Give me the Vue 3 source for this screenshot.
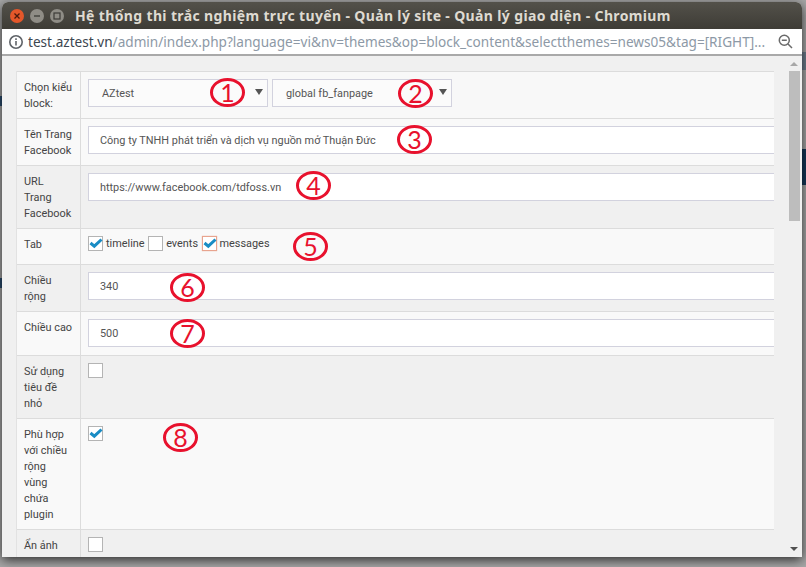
<script setup>
const badges = [
  { n: 1, x: 210, y: 78 }, { n: 2, x: 398, y: 79 }, { n: 3, x: 397, y: 125 }, { n: 4, x: 296, y: 171 },
  { n: 5, x: 293, y: 232 }, { n: 6, x: 170, y: 273 }, { n: 7, x: 170, y: 319 }, { n: 8, x: 163, y: 423 }
]
const pos = (b) => ({ left: b.x + 'px', top: b.y + 'px' })
</script>

<template>
  <div class="screen">
    <span class="bit navy"></span>
    <span class="bit tx1"></span>
    <span class="bit tx2"></span>
    <span class="bit tx3"></span>
    <div class="window">
      <header class="titlebar">
        <div class="lights">
          <span class="light close"><svg width="8" height="8" viewBox="0 0 8 8"><path d="M1.5 1.5l5 5M6.5 1.5l-5 5" stroke="#4a1a0c" stroke-width="1.3"/></svg></span>
          <span class="light"><svg width="8" height="8" viewBox="0 0 8 8"><path d="M1 4h6" stroke="#3c3b37" stroke-width="1.3"/></svg></span>
          <span class="light"><svg width="8" height="8" viewBox="0 0 8 8"><rect x="1" y="1" width="6" height="6" fill="none" stroke="#3c3b37" stroke-width="1.2"/></svg></span>
        </div>
        <div class="title">Hệ thống thi trắc nghiệm trực tuyến - Quản lý site - Quản lý giao diện - Chromium</div>
      </header>
      <div class="urlbar">
        <svg class="info" width="16" height="16" viewBox="0 0 16 16"><circle cx="8" cy="8" r="6.2" fill="none" stroke="#5f6368" stroke-width="1.6"/><path d="M8 7v4.5M8 4.3v1.6" stroke="#5f6368" stroke-width="1.6"/></svg>
        <div class="url"><span class="host">test.aztest.vn</span>/admin/index.php?language=vi&amp;nv=themes&amp;op=block_content&amp;selectthemes=news05&amp;tag=[RIGHT]...</div>
        <svg class="zoomout" width="15" height="15" viewBox="0 0 15 15"><circle cx="6.3" cy="6.3" r="5" fill="none" stroke="#6a6a6a" stroke-width="1.5"/><path d="M3.8 6.3h5M10 10l4 4" stroke="#6a6a6a" stroke-width="1.5"/></svg>
      </div>
      <main class="content">
        <div class="table">
          <div class="row first">
            <div class="label">Chọn kiểu block:</div>
            <div class="ctl selects">
              <div class="select"><span>AZtest</span><i class="caret"></i></div>
              <div class="select"><span>global fb_fanpage</span><i class="caret"></i></div>
            </div>
          </div>
          <div class="row odd">
            <div class="label">Tên Trang Facebook</div>
            <div class="ctl"><div class="input">Công ty TNHH phát triển và dịch vụ nguồn mở Thuận Đức</div></div>
          </div>
          <div class="row even">
            <div class="label">URL<br>Trang Facebook</div>
            <div class="ctl"><div class="input">https://www.facebook.com/tdfoss.vn</div></div>
          </div>
          <div class="row odd">
            <div class="label">Tab</div>
            <div class="ctl checks">
              <span class="box"><svg class="tick" width="14" height="12" viewBox="0 0 14 12"><path d="M1.5 6l3.8 3.2L12.5 2.5" fill="none" stroke="#1a8cc4" stroke-width="3"/></svg></span>
              <span class="cap">timeline</span>
              <span class="box"></span>
              <span class="cap">events</span>
              <span class="box focus"><svg class="tick" width="14" height="12" viewBox="0 0 14 12"><path d="M1.5 6l3.8 3.2L12.5 2.5" fill="none" stroke="#1a8cc4" stroke-width="3"/></svg></span>
              <span class="cap">messages</span>
            </div>
          </div>
          <div class="row even">
            <div class="label">Chiều rộng</div>
            <div class="ctl"><div class="input">340</div></div>
          </div>
          <div class="row odd">
            <div class="label">Chiều cao</div>
            <div class="ctl"><div class="input">500</div></div>
          </div>
          <div class="row even">
            <div class="label">Sử dụng tiêu đề nhỏ</div>
            <div class="ctl top"><span class="box"></span></div>
          </div>
          <div class="row odd">
            <div class="label">Phù hợp với chiều rộng<br>vùng chứa plugin</div>
            <div class="ctl top"><span class="box"><svg class="tick" width="14" height="12" viewBox="0 0 14 12"><path d="M1.5 6l3.8 3.2L12.5 2.5" fill="none" stroke="#1a8cc4" stroke-width="3"/></svg></span></div>
          </div>
          <div class="row even">
            <div class="label">Ẩn ảnh bìa</div>
            <div class="ctl top"><span class="box"></span></div>
          </div>
        </div>
        <div class="scrollbar">
          <i class="arrow up"></i>
          <div class="thumb"></div>
          <i class="arrow down"></i>
        </div>
      </main>
      <span v-for="b in badges" :key="b.n" class="badge" :style="pos(b)">{{ b.n }}</span>
    </div>
  </div>
</template>

<style>
html, body { margin: 0; }
</style>

<style scoped>
.screen {
  position: relative;
  width: 806px;
  height: 567px;
  overflow: hidden;
  background: #a8a8a8;
  font-family: "Noto Sans", "Open Sans", sans-serif;
}
.bit { position: absolute; }
.navy { left: 802px; top: 149px; width: 4px; height: 36px; background: #15385a; }
.tx1 { left: 802px; top: 52px; width: 4px; height: 18px; background: #6f7f8f; }
.tx2 { left: 0; top: 96px; width: 2px; height: 10px; background: #2b4d70; }
.tx3 { left: 0; top: 278px; width: 2px; height: 10px; background: #2b4d70; }
.window {
  position: absolute;
  left: 2px;
  top: 2px;
  width: 800px;
  height: 555px;
  display: flex;
  flex-direction: column;
  background: #f0f0f0;
  border-radius: 6px 6px 0 0;
  box-shadow: 0 3px 12px rgba(0, 0, 0, .75);
}
.titlebar {
  height: 27px;
  flex: none;
  display: flex;
  align-items: center;
  border-radius: 6px 6px 0 0;
  background: linear-gradient(#53514a, #3e3c36);
}
.lights { display: flex; gap: 6px; margin-left: 8px; width: 65px; flex: none; }
.light {
  width: 14px;
  height: 14px;
  border-radius: 50%;
  background: #8f8d86;
  display: flex;
  align-items: center;
  justify-content: center;
}
.light.close { background: #e4572a; }
.title {
  color: #dfdbd2;
  font-size: 14px;
  font-weight: 700;
  letter-spacing: .36px;
  white-space: nowrap;
}
.urlbar {
  height: 27px;
  flex: none;
  box-sizing: border-box;
  display: flex;
  align-items: center;
  background: #fff;
  border-bottom: 2px solid #a9a9a9;
}
.info { margin-left: 6px; flex: none; }
.url {
  margin-left: 4px;
  font-size: 13.6px;
  color: #8d99a6;
  white-space: nowrap;
  width: 742px;
  overflow: hidden;
}
.host { color: #3c4650; }
.zoomout { margin-left: 8px; flex: none; }
.content {
  flex: 1;
  min-height: 0;
  display: flex;
  padding: 15px 0 0 14px;
  overflow: hidden;
}
.table {
  width: 758px;
  flex: none;
  align-self: flex-start;
  color: #444;
  font-family: Roboto, "Noto Sans", sans-serif;
  font-size: 10.9px;
  line-height: 16px;
  border-left: 1px solid #e2e2e2;
  box-sizing: border-box;
}
.row {
  display: grid;
  grid-template-columns: 64px 1fr;
  border-top: 1px solid #dcdcdc;
}
.first { background: #f8f8f8; }
.odd { background: #f9f9f9; }
.even { background: #f0f0f0; }
.label {
  padding: 8px 6px 6px 7px;
  border-right: 1px solid #dcdcdc;
}
.ctl { padding: 7px 0 8px 7px; min-width: 0; overflow: hidden; }
.ctl.top { padding-bottom: 0; }
.selects { display: flex; gap: 4px; }
.select, .input {
  box-sizing: border-box;
  height: 28px;
  padding-top: 1px;
  border: 1px solid #d2d2de;
  background: #fff;
  color: #555;
  display: flex;
  align-items: center;
}
.select {
  flex: none;
  width: 180px;
  padding-left: 13px;
  background: #fbfbfb;
  position: relative;
}
.caret {
  position: absolute;
  right: 4px;
  top: 9px;
  border-left: 4px solid transparent;
  border-right: 4px solid transparent;
  border-top: 6px solid #555;
}
.input { padding-left: 11px; white-space: nowrap; border-right: 0; }
.checks { display: flex; align-items: flex-start; height: 21px; padding-bottom: 7px; }
.box {
  box-sizing: border-box;
  width: 15px;
  height: 15px;
  flex: none;
  display: block;
  position: relative;
  background: #fff;
  border: 1px solid #b4b4b4;
}
.box.focus { border-color: #e8a48f; box-shadow: 0 0 1px #e8a48f; }
.tick { position: absolute; left: 0; top: 0; }
.cap { margin-left: 3px; margin-right: 3.5px; color: #444; }
.scrollbar {
  margin-left: 15px;
  width: 11px;
  flex: none;
  position: relative;
  display: flex;
  flex-direction: column;
  align-items: center;
}
.thumb { width: 11px; height: 150px; background: #bdbdbd; }
.arrow {
  position: absolute;
  left: 1px;
  border-left: 4px solid transparent;
  border-right: 4px solid transparent;
}
.arrow.up { top: -9px; border-bottom: 4px solid #a8a8a8; }
.arrow.down { bottom: 6px; border-top: 4px solid #505050; }
.badge {
  position: absolute;
  width: 35px;
  height: 29px;
  box-sizing: border-box;
  margin: -2px 0 0 -2px;
  border: 3px solid #e8112d;
  border-radius: 50%;
  color: #e8112d;
  font-family: "Lato", "Liberation Sans", sans-serif;
  font-size: 25px;
  line-height: 22px;
  text-align: center;
}
</style>
